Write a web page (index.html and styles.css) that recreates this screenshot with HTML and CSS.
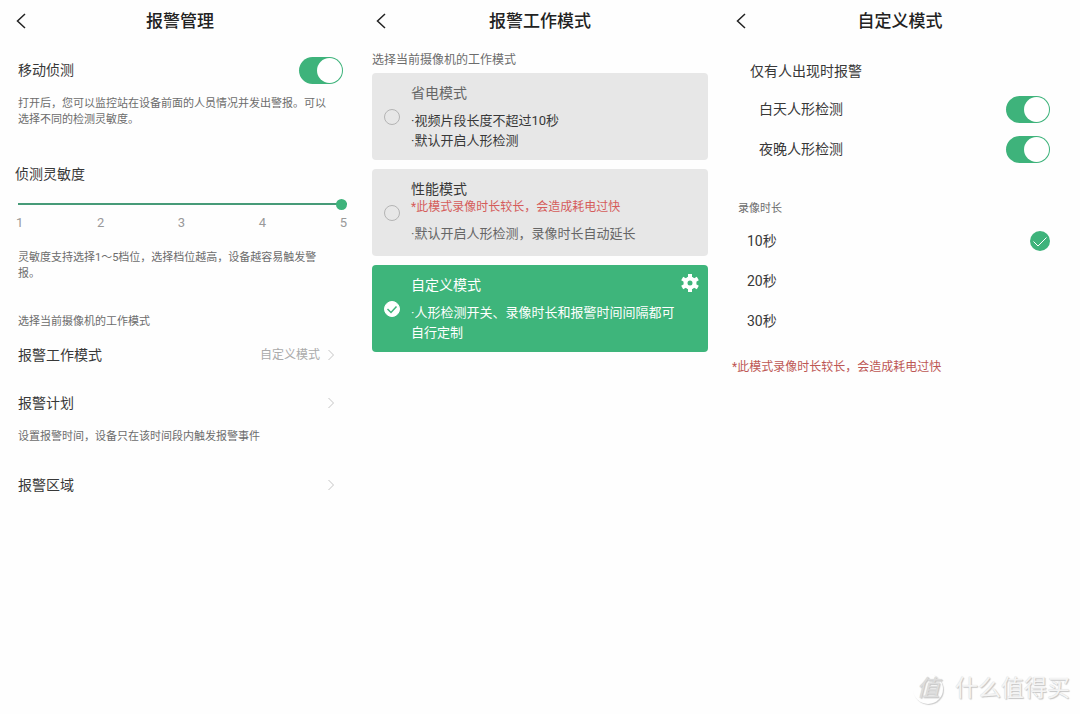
FILE: index.html
```
<!DOCTYPE html>
<html lang="zh-CN">
<head>
<meta charset="utf-8">
<meta name="viewport" content="width=device-width, initial-scale=1">
<title>报警管理</title>
<link rel="stylesheet" href="styles.css">
</head>
<body>
<main class="screens">
  <section class="screen">
    <header class="bar">
      <button class="back" type="button" aria-label="返回"><svg viewBox="0 0 10 16" width="10" height="16"><path d="M9 1 1.500 8 9 15"/></svg></button>
      <h1 class="title">报警管理</h1>
    </header>
    <div class="settings">
      <div class="row">
        <label for="motion">移动侦测</label>
        <input class="switch" type="checkbox" id="motion" checked>
      </div>
      <p class="hint">打开后，您可以监控站在设备前面的人员情况并发出警报。可以选择不同的检测灵敏度。</p>
      <label class="slider-label" for="level">侦测灵敏度</label>
      <input class="slider" type="range" id="level" min="1" max="5" value="5">
      <div class="scale"><span>1</span><span>2</span><span>3</span><span>4</span><span>5</span></div>
      <p class="hint scale-hint">灵敏度支持选择1～5档位，选择档位越高，设备越容易触发警报。</p>
      <p class="hint group-hint">选择当前摄像机的工作模式</p>
      <button class="row link" type="button"><span>报警工作模式</span><span class="value">自定义模式</span><svg class="chevron" viewBox="0 0 6 12" width="6" height="12"><path d="M.5 1 5.500 6 .5 11"/></svg></button>
      <button class="row link plan" type="button"><span>报警计划</span><svg class="chevron" viewBox="0 0 6 12" width="6" height="12"><path d="M.5 1 5.500 6 .5 11"/></svg></button>
      <p class="hint">设置报警时间，设备只在该时间段内触发报警事件</p>
      <button class="row link area" type="button"><span>报警区域</span><svg class="chevron" viewBox="0 0 6 12" width="6" height="12"><path d="M.5 1 5.500 6 .5 11"/></svg></button>
    </div>
  </section>

  <section class="screen">
    <header class="bar">
      <button class="back" type="button" aria-label="返回"><svg viewBox="0 0 10 16" width="10" height="16"><path d="M9 1 1.500 8 9 15"/></svg></button>
      <h1 class="title">报警工作模式</h1>
    </header>
    <div class="modes">
      <p class="modes-hint">选择当前摄像机的工作模式</p>
      <label class="card">
        <input class="dot" type="radio" name="mode">
        <span class="card-text">
          <span class="card-title soft">省电模式</span>
          <span class="card-body">·视频片段长度不超过10秒<br>·默认开启人形检测</span>
        </span>
      </label>
      <label class="card">
        <input class="dot" type="radio" name="mode">
        <span class="card-text">
          <span class="card-title">性能模式</span>
          <span class="card-warn">*此模式录像时长较长，会造成耗电过快</span>
          <span class="card-body soft">·默认开启人形检测，录像时长自动延长</span>
        </span>
      </label>
      <div class="card active">
        <input class="dot" type="radio" name="mode" id="custom" checked>
        <label class="card-text" for="custom">
          <span class="card-title">自定义模式</span>
          <span class="card-body">·人形检测开关、录像时长和报警时间间隔都可自行定制</span>
        </label>
        <svg class="tick" viewBox="0 0 16 16" width="16" height="16"><path d="M3.500 8 7 11.500 12.500 5.500"/></svg>
        <button class="gear" type="button" aria-label="设置"><svg viewBox="0 0 18 18" width="18" height="18"><path class="teeth" d="M9 0v18M1.200 4.500l15.600 9M16.800 4.500l-15.600 9"/><circle cx="9" cy="9" r="4.500"/></svg></button>
      </div>
    </div>
  </section>

  <section class="screen">
    <header class="bar">
      <button class="back" type="button" aria-label="返回"><svg viewBox="0 0 10 16" width="10" height="16"><path d="M9 1 1.500 8 9 15"/></svg></button>
      <h1 class="title">自定义模式</h1>
    </header>
    <div class="custom">
      <h2 class="custom-title">仅有人出现时报警</h2>
      <div class="row detect">
        <label for="day">白天人形检测</label>
        <input class="switch" type="checkbox" id="day" checked>
      </div>
      <div class="row detect">
        <label for="night">夜晚人形检测</label>
        <input class="switch" type="checkbox" id="night" checked>
      </div>
      <p class="hint length-title">录像时长</p>
      <label class="row option">10秒<input class="pick" type="radio" name="length" checked><svg class="mark" viewBox="0 0 20 20" width="20" height="20"><circle cx="10" cy="10" r="10"/><path d="M3.500 10.500 8 15 16.500 6.500"/></svg></label>
      <label class="row option">20秒<input class="pick" type="radio" name="length"><svg class="mark" viewBox="0 0 20 20" width="20" height="20"><circle cx="10" cy="10" r="10"/><path d="M3.500 10.500 8 15 16.500 6.500"/></svg></label>
      <label class="row option">30秒<input class="pick" type="radio" name="length"><svg class="mark" viewBox="0 0 20 20" width="20" height="20"><circle cx="10" cy="10" r="10"/><path d="M3.500 10.500 8 15 16.500 6.500"/></svg></label>
      <p class="note">*此模式录像时长较长，会造成耗电过快</p>
    </div>
  </section>
</main>
<div class="watermark"><span class="seal">值</span><span>什么值得买</span></div>
</body>
</html>
```
FILE: styles.css
```
* {
  box-sizing: border-box;
}

body {
  margin: 0;
  min-height: 100vh;
  position: relative;
  background: #fefefe;
  color: #383838;
  font: 14px/20px Roboto, "Noto Sans CJK SC", sans-serif;
}

h1, h2, p {
  margin: 0;
}

button {
  padding: 0;
  border: 0;
  background: none;
  color: inherit;
  font: inherit;
  text-align: left;
}

input {
  appearance: none;
  margin: 0;
}

svg {
  display: block;
  flex: none;
}

.screens {
  display: grid;
  grid-template-columns: repeat(3, 1fr);
}

/* header */
.bar {
  display: grid;
  grid-template-columns: 26px 1fr 26px;
  align-items: center;
  height: 42px;
  padding: 0 16px;
}

.back path {
  fill: none;
  stroke: #222;
  stroke-width: 1.5;
}

.title {
  text-align: center;
  font-size: 17px;
  line-height: 24px;
  font-weight: 500;
  color: #222;
}

/* shared rows */
.row {
  display: flex;
  align-items: center;
  justify-content: space-between;
  width: 100%;
  min-height: 40px;
}

.hint {
  font-size: 11px;
  line-height: 16px;
  color: #6c6c6c;
}

.switch {
  flex: none;
  width: 44px;
  height: 27px;
  padding: 1px;
  border-radius: 14px;
  background: #c8c8c8;
}

.switch::before {
  content: "";
  display: block;
  width: 25px;
  height: 25px;
  border-radius: 50%;
  background: #fff;
}

.switch:checked {
  background: #3eb37b;
}

.switch:checked::before {
  margin-left: auto;
}

/* alarm settings */
.settings {
  padding: 8px 17px 0 18px;
}

.settings > .hint {
  padding: 6px 10px 0 0;
}

.slider-label {
  display: block;
  margin: 36px 0 13px -3px;
}

.slider {
  display: block;
  width: calc(100% + 4px);
  height: 14px;
  background: linear-gradient(#479b78, #479b78) center / 100% 2px no-repeat;
}

.slider::-webkit-slider-thumb {
  appearance: none;
  width: 11px;
  height: 11px;
  border-radius: 50%;
  background: #3eb37b;
}

.scale {
  display: flex;
  justify-content: space-between;
  margin: 4px -4px 0 -2px;
  font-size: 13px;
  line-height: 16px;
  color: #999;
}

.settings > .scale-hint {
  margin-top: 13px;
}

.settings > .group-hint {
  margin: 26px 0 5px;
}

.link {
  padding-right: 9px;
}

.value {
  margin: 0 8px 0 auto;
  font-size: 12px;
  color: #aaa;
}

.chevron path {
  fill: none;
  stroke: #c4c4c4;
}

.plan {
  margin-top: 8px;
}

.area {
  margin-top: 20px;
}

/* working modes */
.modes {
  display: grid;
  gap: 9px;
  padding: 9px 12px 0;
}

.modes-hint {
  margin-bottom: -5px;
  font-size: 12px;
  line-height: 18px;
  color: #6c6c6c;
}

.card {
  position: relative;
  display: flex;
  gap: 11px;
  min-height: 87px;
  padding: 10px 22px 9px 12px;
  border-radius: 4px;
  background: #e7e7e7;
}

.dot {
  flex: none;
  align-self: center;
  width: 16px;
  height: 16px;
  border: 1px solid #b4b4b4;
  border-radius: 50%;
}

.card-text,
.card-title,
.card-warn,
.card-body {
  display: block;
}

.card-body {
  margin-top: 8px;
  font-size: 13px;
}

.card-warn {
  font-size: 12px;
  line-height: 17px;
  color: #d55c5a;
}

.soft {
  color: #666;
}

.active {
  background: #3eb57b;
  color: #fff;
}

.active .dot {
  border-color: #fff;
  background: #fff;
}

.tick {
  position: absolute;
  top: 50%;
  left: 12px;
  margin-top: -8px;
  pointer-events: none;
}

.tick path {
  fill: none;
  stroke: #3eb57b;
  stroke-width: 1.5;
}

.gear {
  position: absolute;
  top: 9px;
  right: 9px;
}

.gear .teeth {
  stroke: #fff;
  stroke-width: 4;
}

.gear circle {
  fill: #3eb57b;
  stroke: #fff;
  stroke-width: 4;
}

/* custom mode */
.custom {
  padding: 19px 30px 0 12px;
}

.custom-title {
  padding-left: 18px;
  margin-bottom: 8px;
  font-size: 14px;
  font-weight: 400;
}

.detect {
  padding-left: 27px;
}

.length-title {
  margin: 32px 0 4px;
  padding-left: 6px;
}

.option {
  padding-left: 15px;
}

.pick {
  margin-left: auto;
}

.mark {
  visibility: hidden;
}

.pick:checked + .mark {
  visibility: visible;
}

.mark circle {
  fill: #3eb37b;
}

.mark path {
  fill: none;
  stroke: #fff;
}

.note {
  margin-top: 16px;
  font-size: 12px;
  color: #bd5754;
}

/* watermark */
.watermark {
  position: absolute;
  right: 10px;
  bottom: 9px;
  display: flex;
  align-items: center;
  gap: 12px;
  font-size: 23px;
  line-height: 32px;
  color: #f4f4f4;
  text-shadow: 1px 1px 1px #c4c4c4, 0 0 1px #d0d0d0;
}

.seal {
  width: 30px;
  height: 30px;
  border-radius: 50%;
  box-shadow: 1px 1px 1px #ccc;
  line-height: 30px;
  text-align: center;
  font-style: italic;
  color: #ddd;
}
```
